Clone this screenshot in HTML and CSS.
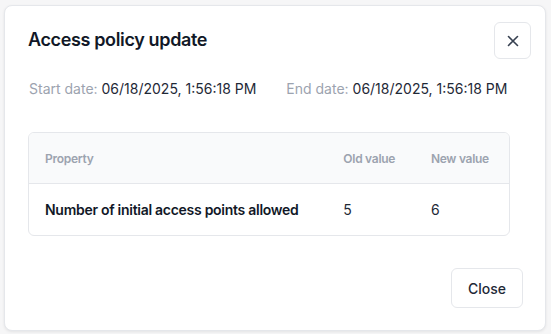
FILE: index.html
```html
<!DOCTYPE html>
<html lang="en">
<head>
  <meta charset="UTF-8" />
  <title>Access policy update</title>
  <link rel="stylesheet" href="styles.css">
</head>
<body>
  <div class="dialog">
    <div class="dialog-header">
      <h2 class="dialog-title">Access policy update</h2>
      <button class="icon-btn" aria-label="Close">
        <svg width="16" height="16" viewBox="0 0 16 16" fill="none" stroke="#374151" stroke-width="1.6" stroke-linecap="round">
          <path d="M3.5 3.5l9 9M12.5 3.5l-9 9"/>
        </svg>
      </button>
    </div>

    <div class="dates">
      <span><span class="date-label">Start date:</span> 06/18/2025, 1:56:18 PM</span>
      <span><span class="date-label">End date:</span> 06/18/2025, 1:56:18 PM</span>
    </div>

    <div class="table-wrap">
      <table class="changes">
        <thead>
          <tr>
            <th>Property</th>
            <th>Old value</th>
            <th>New value</th>
          </tr>
        </thead>
        <tbody>
          <tr>
            <td class="prop-name">Number of initial access points allowed</td>
            <td>5</td>
            <td>6</td>
          </tr>
        </tbody>
      </table>
    </div>

    <div class="dialog-footer">
      <button class="btn">Close</button>
    </div>
  </div>
</body>
</html>
```

FILE: styles.css
```css
body {
  margin: 0;
  font-family: 'Inter', 'Liberation Sans', sans-serif;
  background-color: #f6f6f7;
  color: #111827;
  padding: 5px 5px 3px 4px;
  box-sizing: border-box;
  height: 334px;
  overflow: hidden;
}

.dialog {
  background: #ffffff;
  border: 1px solid #e5e7eb;
  border-radius: 8px;
  box-shadow: 0 1px 3px rgba(0, 0, 0, 0.08);
  padding: 16px 22px 23px 23px;
  box-sizing: border-box;
  height: 326px;
}

.dialog-header {
  display: flex;
  align-items: center;
  justify-content: space-between;
  margin-right: -8px;
}

.dialog-title {
  margin: -3px 0 0;
  font-size: 18px;
  font-weight: 600;
  letter-spacing: -0.02em;
  color: #111827;
}

.icon-btn {
  width: 37px;
  height: 37px;
  display: flex;
  align-items: center;
  justify-content: center;
  background: #ffffff;
  border: 1px solid #e5e7eb;
  border-radius: 6px;
  padding: 0;
  cursor: pointer;
}

.dates {
  display: flex;
  gap: 30px;
  margin-top: 20px;
  font-size: 14px;
  line-height: 20px;
  color: #1f2937;
  padding-left: 1px;
  white-space: nowrap;
}

.date-label {
  color: #9ca3af;
}

.table-wrap {
  margin-top: 33px;
  width: 480px;
  border: 1px solid #e5e7eb;
  border-radius: 6px;
  overflow: hidden;
}

.changes {
  width: 100%;
  border-collapse: collapse;
  font-size: 14px;
  letter-spacing: -0.02em;
  color: #1f2937;
  white-space: nowrap;
}

.changes th {
  background: #f9fafb;
  color: #9ca3af;
  font-size: 12px;
  font-weight: 600;
  text-align: left;
  height: 50px;
  padding: 0 16px;
  border-bottom: 1px solid #e5e7eb;
}

.changes td {
  height: 51px;
  padding: 0 16px;
}

.prop-name {
  font-weight: 600;
  color: #111827;
}

.dialog-footer {
  display: flex;
  justify-content: flex-end;
  margin-top: 32px;
}

.btn {
  font-family: inherit;
  font-size: 14px;
  font-weight: 500;
  color: #1f2937;
  background: #ffffff;
  border: 1px solid #e5e7eb;
  border-radius: 6px;
  height: 40px;
  padding: 0 16px;
  cursor: pointer;
}
```
